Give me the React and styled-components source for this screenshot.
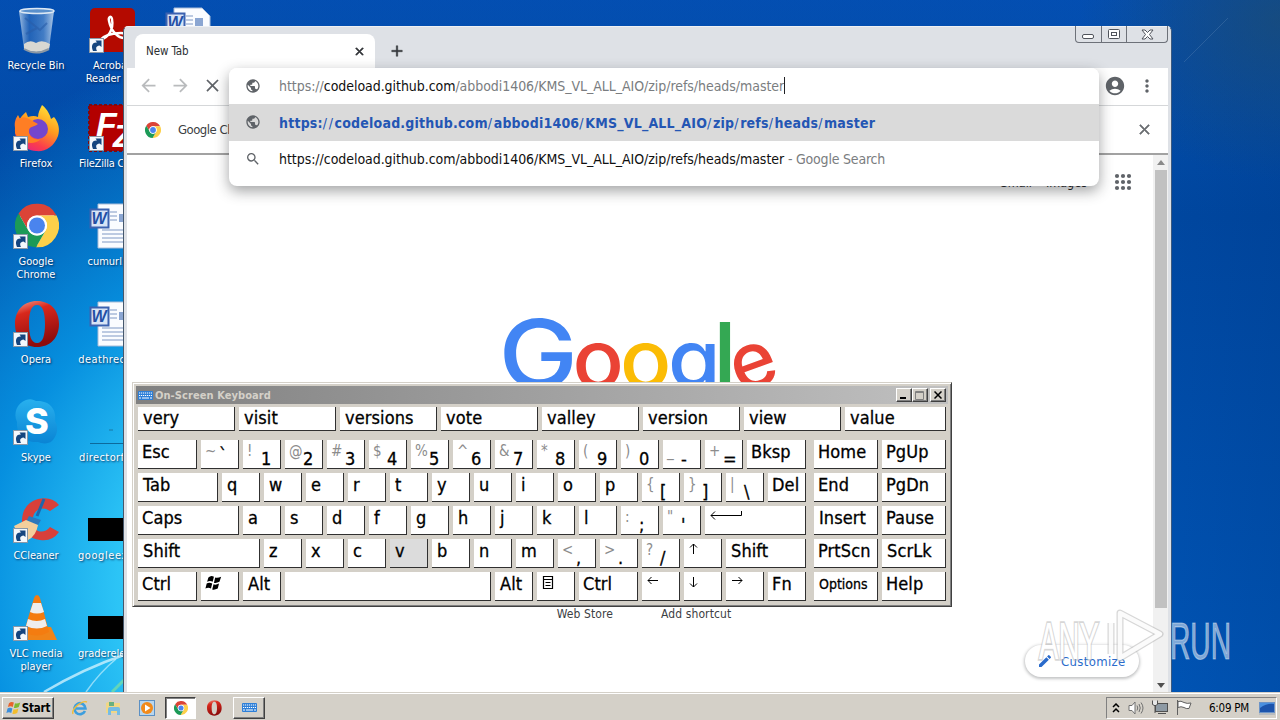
import React from 'react';
import styled, { createGlobalStyle } from 'styled-components';
import {
    MdPublic, MdSearch, MdAccountCircle, MdMoreVert, MdEdit, MdClose, MdArrowBack, MdArrowForward, MdAdd
} from 'react-icons/md';

const GlobalStyle = createGlobalStyle`
    body {
        margin: 0;
        overflow: hidden;
        font-family: "DejaVu Sans Condensed", "DejaVu Sans", sans-serif;
        font-stretch: condensed;
    }

    * {
        box-sizing: border-box;
    }

    svg {
        display: block;
        flex: none;
    }
`

const Desktop = styled.div`
    position: relative;
    width: 1280px;
    height: 720px;
    overflow: hidden;
    display: flex;
    flex-direction: column;
    justify-content: space-between;
    background:
        radial-gradient(ellipse 200px 160px at 1280px 20px, rgba(28, 76, 116, 0.75), transparent),
        linear-gradient(90deg, transparent 88%, rgba(0, 40, 100, 0.14) 100%),
        linear-gradient(180deg, rgba(0, 70, 185, 0.15), transparent 20%),
        radial-gradient(ellipse 560px 560px at 330px 590px, #4fdcfa 0%, #2cc4f6 38%, rgba(8, 160, 236, 0.8) 62%, transparent 100%),
        linear-gradient(180deg, #0450b0 0%, #0048a2 30%, #0056b8 100%);
`

const LightStreaks = styled.svg`
    position: absolute;
    left: 0;
    top: 0;
`

const IconColumns = styled.div`
    display: flex;
    margin-left: -2px;
    padding-top: 6px;
`

const IconColumn = styled.div`
    width: 76px;
    display: flex;
    flex-direction: column;
`

const DesktopItem = styled.div`
    height: 98px;
    display: flex;
    flex-direction: column;
    align-items: center;
`

const ItemLabel = styled.div`
    margin-top: 4px;
    font-size: 11px;
    line-height: 13px;
    letter-spacing: ${props => props.$spacing || 0}px;
    text-align: center;
    color: white;
    white-space: pre;
    text-shadow: 1px 1px 2px rgba(0, 20, 60, 0.8);
`

/* ---------- browser ---------- */

const Browser = styled.div`
    position: absolute;
    left: 123px;
    top: 26px;
    width: 1049px;
    height: 667px;
    padding: 0 3px;
    background: #dee1e6;
    border-left: 1px solid #46586c;
    border-top: 1px solid #eef0f3;
    border-right: 1px solid #3c5a80;
    border-radius: 5px 5px 0 0;
`

const TabStrip = styled.div`
    height: 41px;
    padding: 7px 0 0 8px;
    display: flex;
    align-items: flex-start;
`

const Tab = styled.div`
    width: 240px;
    height: 34px;
    padding: 0 9px 0 11px;
    display: flex;
    align-items: center;
    justify-content: space-between;
    background: white;
    border-radius: 8px 8px 0 0;
    font-size: 11.5px;
    letter-spacing: -0.1px;
    color: #2d2f33;

    path:last-child {
        stroke-width: 1.4px;
    }
`

const NewTabButton = styled.div`
    margin: 8px 0 0 13px;
    color: #33363b;

    path:last-child {
        stroke-width: 0.6px;
    }
`

const WindowButtons = styled.div`
    margin: -8px 0 0 auto;
    height: 17px;
    display: flex;
    border: 1px solid #6d7179;
    border-top: none;
    border-radius: 0 0 4px 4px;
`

const WindowButton = styled.div`
    width: ${props => props.$width}px;
    display: flex;
    align-items: center;
    justify-content: center;

    & + & {
        border-left: 1px solid #6d7179;
    }
`

const Toolbar = styled.div`
    height: 38px;
    display: flex;
    align-items: center;
    background: white;
    border-bottom: 1px solid #d5d7d9;
    color: #5f6368;
    padding: 0 11px 2px 11px;
    gap: 11px;
`

const Muted = styled.span`
    color: #b9bbbd;
`

const ToolbarEnd = styled.div`
    margin-left: auto;
    display: flex;
    align-items: center;
    gap: 11px;
`

const InfoBar = styled.div`
    height: 49px;
    display: flex;
    align-items: center;
    background: white;
    border-bottom: 2px solid #a2a2a2;
    padding: 0 15px 0 18px;
    gap: 17px;
    font-size: 13px;
    letter-spacing: -0.5px;
    color: #3c4043;
`

const InfoClose = styled.div`
    margin-left: auto;
    color: #6a6d71;

    path:last-child {
        stroke-width: 0.8px;
    }
`

const PageRow = styled.div`
    height: 538px;
    display: flex;
    background: white;
`

const Page = styled.div`
    flex: 1;
    display: flex;
    flex-direction: column;
    align-items: center;
`

const PageLinks = styled.div`
    align-self: stretch;
    height: 54px;
    padding: 0 21px 0 0;
    display: flex;
    justify-content: flex-end;
    align-items: center;
    gap: 14px;
    font-size: 12.5px;
    color: #202124;

    svg {
        margin-left: 13px;
    }
`

const GoogleLogo = styled.svg`
    margin-top: 102px;
    overflow: visible;
`

const Shortcuts = styled.div`
    margin: 204px 0 0 8px;
    display: flex;
    gap: 48px;
    font-size: 12px;
    line-height: 14px;
    color: #3c4043;
    letter-spacing: 0.1px;
`

const CustomizeButton = styled.div`
    align-self: flex-end;
    margin: 24px 14px 0 0;
    width: 114px;
    height: 32px;
    display: flex;
    align-items: center;
    gap: 8px;
    padding-left: 12px;
    border-radius: 16px;
    background: white;
    box-shadow: 0 1px 3px 1px rgba(60, 64, 67, 0.3);
    font-size: 13px;
    letter-spacing: 0.35px;
    color: #2a6bcb;
`

const ScrollBar = styled.div`
    width: 15px;
    display: flex;
    flex-direction: column;
    align-items: center;
    background: #f1f1f1;
    padding: 5px 0;
`

const ScrollThumb = styled.div`
    width: 12px;
    height: 438px;
    margin: 5px 0 auto;
    background: #c1c1c1;
`

const Triangle = styled.div`
    width: 0;
    height: 0;
    border: 4px solid transparent;
    ${props => props.$up ? 'border-top: none; border-bottom: 5px solid #8a8a8a;' : 'border-bottom: none; border-top: 5px solid #505050;'}
`

const Suggestions = styled.div`
    position: absolute;
    left: 105px;
    top: 41px;
    width: 870px;
    height: 118px;
    overflow: hidden;
    background: white;
    border-radius: 8px;
    box-shadow: 0 5px 14px rgba(32, 33, 36, 0.42);
`

const Suggestion = styled.div`
    height: ${props => props.$height}px;
    display: flex;
    align-items: center;
    padding: 0 0 1px 16px;
    background: ${props => props.$selected ? '#dadada' : 'white'};
    color: #5f6368;
`

const SuggestionIcon = styled.div`
    width: 34px;
`

const Url = styled.span`
    font-size: 14px;
    line-height: 18px;
    letter-spacing: ${props => props.$spacing || -0.05}px;
    white-space: pre;
    color: ${props => props.$color || '#7a7d80'};

    b {
        font-weight: normal;
        color: #101010;
    }
`

const MatchUrl = styled.span`
    font-size: 14px;
    line-height: 18px;
    padding-top: 1px;
    font-weight: bold;
    color: #2456b4;
    letter-spacing: 0.21px;
    white-space: pre;

    i {
        font-style: normal;
        font-weight: normal;
        letter-spacing: 1.6px;
    }
`

const Caret = styled.span`
    width: 1px;
    height: 17px;
    background: #202124;
`

/* ---------- on-screen keyboard ---------- */

const Keyboard = styled.div`
    position: absolute;
    left: 132px;
    top: 382px;
    width: 820px;
    height: 225px;
    padding: 2px;
    background: #d4d0c8;
    border: 1px solid #d4d0c8;
    border-right-color: #404040;
    border-bottom-color: #404040;
    box-shadow: inset 1px 1px white, inset -1px -1px #808080;
`

const TitleBar = styled.div`
    height: 18px;
    margin: 1px 1px 3px;
    padding: 0 2px;
    display: flex;
    align-items: center;
    gap: 2px;
    background: linear-gradient(90deg, #808080, #c0c0c0);
    color: #d4d0c8;
    font-size: 11px;
    font-weight: bold;
    letter-spacing: 0.08px;
`

const TitleButtons = styled.div`
    margin-left: auto;
    display: flex;
`

const TitleButton = styled.div`
    width: 16px;
    height: 14px;
    margin-left: ${props => props.$apart ? 2 : 0}px;
    display: flex;
    align-items: center;
    justify-content: center;
    background: #d4d0c8;
    border: 1px solid white;
    border-right-color: #404040;
    border-bottom-color: #404040;
    box-shadow: inset -1px -1px #808080;
`

const KeyRow = styled.div`
    display: flex;
    gap: 4px;
    height: ${props => props.$words ? 24 : 29}px;
    margin: 0 0 ${props => props.$words ? 9 : 4}px 3px;
`

const KeyCap = styled.div`
    width: ${props => props.$width}px;
    margin-left: ${props => props.$apart ? 4 : 0}px;
    flex: none;
    display: flex;
    align-items: flex-start;
    padding: ${props => props.$word ? 2 : 3}px 0 0 ${props => props.$indent || 4}px;
    background: ${props => props.$pressed ? '#dcdcdc' : 'white'};
    border-right: 1px solid #303030;
    border-bottom: 1px solid #303030;
    font-size: ${props => props.$small ? 14 : 18}px;
    line-height: 18px;
    letter-spacing: ${props => props.$small ? 0 : 0.1}px;
    color: black;
    white-space: pre;
    -webkit-text-stroke: 0.3px black;
`

const Upper = styled.span`
    width: 14px;
    font-size: 15px;
    line-height: 17px;
    color: #8c8c8c;
    -webkit-text-stroke: 0;
`

const Lower = styled.span`
    margin-top: ${props => props.$drop}px;
`

/* ---------- taskbar ---------- */

const TaskBar = styled.div`
    position: relative;
    height: 28px;
    display: flex;
    align-items: center;
    padding: 2px 3px 0 2px;
    background: #d4d0c8;
    border-top: 1px solid #d4d0c8;
    box-shadow: inset 0 1px white;
`

const TaskButton = styled.div`
    width: ${props => props.$width}px;
    height: 22px;
    margin-left: ${props => props.$left || 0}px;
    display: flex;
    align-items: center;
    justify-content: center;
    gap: 1px;
    background: ${props => props.$pressed ? 'white' : '#d4d0c8'};
    border: 1px solid ${props => props.$pressed ? '#404040' : 'white'};
    border-right-color: ${props => props.$pressed ? 'white' : '#404040'};
    border-bottom-color: ${props => props.$pressed ? 'white' : '#404040'};
    box-shadow: ${props => props.$pressed ? 'inset 1px 1px #808080' : 'inset -1px -1px #808080'};
    font-size: 11.5px;
    font-weight: bold;
    letter-spacing: -0.2px;
`

const QuickLaunch = styled.div`
    display: flex;
    gap: 17px;
    margin-left: 18px;
`

const OperaSlot = styled.div`
    margin-left: 10px;
`

const Tray = styled.div`
    width: 171px;
    height: 22px;
    margin-left: auto;
    padding: 0 1px 0 5px;
    display: flex;
    align-items: center;
    border: 1px solid #808080;
    border-right-color: white;
    border-bottom-color: white;
    font-size: 11.5px;
    letter-spacing: -0.25px;

    svg + svg {
        margin-left: 8px;
    }
`

const Clock = styled.span`
    margin: 0 auto 0 17px;
    white-space: nowrap;
`

const Watermark = styled.svg`
    position: absolute;
    left: 1030px;
    top: 604px;
`

/* ---------- drawings ---------- */

const ChromeIcon = ({ size }) => (
    <svg width={size} height={size} viewBox="2 2 44 44">
        <circle cx="24" cy="24" r="20" fill="#fff" />
        {['#db4437', '#fdd04a', '#1c9a57'].map((fill, i) => (
            <path
                key={fill}
                fill={fill}
                transform={`rotate(${i * 120} 24 24)`}
                d="M24 14L43.6 14A22 22 0 0 0 5.54 12.03L15.34 29A10 10 0 0 1 24 14Z"
            />
        ))}
        <circle cx="24" cy="24" r="10" fill="#fff" />
        <circle cx="24" cy="24" r="8" fill="#4a84ee" />
    </svg>
)

const ShortcutBadge = () => (
    <g>
        <rect x="1.500" y="32.500" width="14" height="14" fill="#f4f8fc" stroke="#8a98a8" />
        <path d="M5 45C2.500 39 5 36 9 36.500L7.500 34.500H13.500V41L11.500 39.500C8 40 7.500 42 9 45Z" fill="#15457f" />
    </g>
)

const Picture = ({ children, badge = true }) => (
    <svg width="48" height="49" viewBox="0 0 48 49">
        {children}
        {badge && <ShortcutBadge />}
    </svg>
)

const RecycleBin = () => (
    <Picture badge={false}>
        <defs>
            <linearGradient id="glass">
                <stop offset="0" stopColor="#c8dcf0" stopOpacity="0.8" />
                <stop offset="0.3" stopColor="#3f78c0" stopOpacity="0.5" />
                <stop offset="0.7" stopColor="#6d9cd4" stopOpacity="0.6" />
                <stop offset="1" stopColor="#dbe9f6" stopOpacity="0.8" />
            </linearGradient>
        </defs>
        <path d="M7 5L12 43Q24 50 37 43L42 5Z" fill="url(#glass)" />
        <path d="M12 38Q18 33 24 37Q30 33 38 38L37 43Q24 49 12 43Z" fill="#d9d8d2" />
        <path d="M13 12L28 24L35 17M14 28L25 22" stroke="#2a5ea8" strokeWidth="2" fill="none" opacity="0.6" />
        <path d="M12 43Q24 50 37 43" stroke="#8c98a4" strokeWidth="2" fill="none" />
        <ellipse cx="25" cy="5" rx="17" ry="2.500" fill="#5a90cc" stroke="#dce8f4" strokeWidth="1.500" />
    </Picture>
)

const Firefox = () => (
    <Picture>
        <defs>
            <linearGradient id="fox" x1="0.8" y1="0" x2="0.3" y2="1">
                <stop offset="0" stopColor="#ffe83a" />
                <stop offset="0.45" stopColor="#ff9a1f" />
                <stop offset="0.8" stopColor="#fb3d4c" />
                <stop offset="1" stopColor="#e8257c" />
            </linearGradient>
        </defs>
        <path d="M30 1C36 6 38 11 39 15L42 13C47 19 48 26 46 32C42 43 33 48 24 47C11 46 2 37 3 24C2 18 4 14 6 11L8 15C9 12 12 10 14 8L16 13Q22 11 26 13C26 9 28 5 30 1Z" fill="url(#fox)" />
        <circle cx="26" cy="25" r="10" fill="#7446cc" />
        <path d="M3 19C7 12 13 13 17 15L26 20C22 23 18 22 17 26C16 33 23 37 29 35C21 43 7 38 3 29Z" fill="#ff7e24" />
    </Picture>
)

const Opera = ({ size = 48, badge = true }) => (
    <svg width={size} height={badge ? size + 1 : size} viewBox={badge ? '0 0 48 49' : '0 0 48 48'}>
        <defs>
            <linearGradient id="opera" x1="0" y1="0" x2="0.3" y2="1">
                <stop offset="0" stopColor="#f5a090" />
                <stop offset="0.3" stopColor="#d8281c" />
                <stop offset="1" stopColor="#8e0c0c" />
            </linearGradient>
        </defs>
        <path fillRule="evenodd" fill="url(#opera)" d="M25 1C38 1 47 10 47 24C47 38 38 47 25 47C12 47 3 38 3 24C3 10 12 1 25 1ZM25 5C19 5 17 13 17 24C17 35 19 43 25 43C31 43 33 35 33 24C33 13 31 5 25 5Z" />
        {badge && <ShortcutBadge />}
    </svg>
)

const Acrobat = () => (
    <Picture>
        <rect x="2" y="2" width="45" height="44" rx="5" fill="#b40a00" />
        <path d="M12 34C20 32 26 24 24 13C23 9 20 11 21 15C23 25 30 33 38 32C42 31 39 27 33 27C24 27 16 30 12 34Z" fill="none" stroke="#fff" strokeWidth="2.400" />
    </Picture>
)

const FileZilla = () => (
    <Picture>
        <rect x="1" y="1" width="46" height="46" fill="#b30000" stroke="#7d0a10" strokeDasharray="3 2" strokeWidth="2" />
        <text x="8" y="32" fontFamily="Liberation Sans" fontWeight="bold" fontStyle="italic" fontSize="34" fill="#fff">F</text>
        <text x="25" y="43" fontFamily="Liberation Sans" fontWeight="bold" fontStyle="italic" fontSize="32" fill="#fff">Z</text>
    </Picture>
)

const WordDoc = () => (
    <Picture badge={false}>
        <path d="M10 2H38L46 10V46H10Z" fill="#fafcff" stroke="#a8bcd8" />
        <path d="M22 10H29M22 14H29M22 18H29M14 28H40M14 32H40M14 36H40M14 40H40" stroke="#7f98c4" />
        <rect x="31" y="12" width="8" height="8" fill="#8ba6d2" />
        <rect x="2.500" y="7.500" width="18" height="18" fill="#d8e4f6" stroke="#3c62b0" strokeWidth="2" />
        <text x="3.500" y="22" fontFamily="Liberation Sans" fontWeight="bold" fontStyle="italic" fontSize="16" fill="#234fa4">W</text>
    </Picture>
)

const Skype = () => (
    <Picture>
        <defs>
            <linearGradient id="skype" x1="0" y1="0" x2="0" y2="1">
                <stop offset="0" stopColor="#28b0ee" />
                <stop offset="1" stopColor="#0a84d4" />
            </linearGradient>
        </defs>
        <path d="M14 2C19 0 22 2 24 3C37 2 45 11 43 23C47 30 45 38 40 43C35 47 29 45 26 44C13 45 4 36 5 24C1 15 5 5 14 2Z" fill="url(#skype)" />
        <text x="13" y="36" fontFamily="Inter" fontWeight="800" fontSize="36" fill="#fff">S</text>
    </Picture>
)

const CCleaner = () => (
    <Picture>
        <path d="M47 9L38 15Q28 9 22 18Q17 30 26 35Q33 37 38 31L47 36Q40 46 28 44Q13 42 10 28Q9 8 26 3Q40 0 47 9Z" fill="#d8403a" />
        <path d="M32 3L25 20" stroke="#1f66ac" strokeWidth="3" />
        <path d="M17 20L29 24L26 29L14 26Z" fill="#2d78bc" />
        <path d="M2 30L14 24L26 29Q24 40 16 44L6 38Z" fill="#f4cf9c" />
    </Picture>
)

const Vlc = () => (
    <Picture>
        <path d="M7 33H39L45 46H3Z" fill="#f08418" />
        <path d="M25 1Q27 1 28 4L37 38Q25 45 12 38L22 4Q23 1 25 1Z" fill="#f47c10" />
        <path d="M21 9H29L32 18Q25 21 18 18ZM16 25Q25 29 33 25L35 32Q25 37 14 32Z" fill="#eeeeee" />
    </Picture>
)

const BlackFile = () => (
    <Picture badge={false}>
        <rect x="0" y="22" width="48" height="23" fill="#000" />
    </Picture>
)

const ThinFile = () => (
    <Picture badge={false}>
        <path d="M2 45.500H40" stroke="#0c6a9c" />
        <path d="M21 32H25" stroke="#1878a4" />
    </Picture>
)

const KeyboardIcon = ({ width = 15 }) => (
    <svg width={width} height={width * 0.6} viewBox="0 0 15 9">
        <rect width="15" height="9" rx="1" fill="#2d7fd8" />
        <path d="M1 2H14M1 4.500H14" stroke="#fff" strokeWidth="1.200" strokeDasharray="1.200 0.800" />
        <path d="M1 7H3M4 7H11M12 7H14" stroke="#fff" strokeWidth="1.200" />
    </svg>
)

const WindowsFlag = ({ width, colors }) => (
    <svg width={width} height={width * 0.9} viewBox="0 0 20 18">
        <path d="M4 3Q7 0 10.500 2L9 8Q6 6 2.500 8Z" fill={colors[0]} />
        <path d="M12 3Q15 4 19 2L17 8Q13 10 10.500 9Z" fill={colors[1]} />
        <path d="M2 10Q5 8 8.500 10L7 16Q4 14 0.500 16Z" fill={colors[2]} />
        <path d="M10 11Q13 12 16.500 10L15 16Q11 18 8.500 17Z" fill={colors[3]} />
    </svg>
)

const arrows = {
    left: 'M12 4.5H2M5.5 1L2 4.5L5.5 8',
    right: 'M2 4.5H12M8.5 1L12 4.5L8.5 8',
    up: 'M5.5 11V1M2 4.5L5.5 1L9 4.5',
    down: 'M5.5 1V11M2 7.5L5.5 11L9 7.5'
}

const KeyArrow = ({ to }) => (
    <svg width="18" height="14" viewBox="0 -1 18 14" fill="none" stroke="#000">
        <path d={arrows[to]} />
    </svg>
)

const EnterArrow = () => (
    <svg width="36" height="14" viewBox="0 -1 36 14" fill="none" stroke="#000">
        <path d="M32.500 1V5.500H2M6 1.500L2 5.500L6 9.500" />
    </svg>
)

const MenuGlyph = () => (
    <svg width="14" height="16" viewBox="-1 -1 14 16" fill="none" stroke="#000">
        <path d="M0.500 0.500H9.500V12.500H0.500ZM0 3.500H10M2.500 6.500H7.500M2.500 9.500H7.500" strokeWidth="1.200" />
    </svg>
)

/* ---------- data ---------- */

const desktopColumns = [
    [
        { art: <RecycleBin />, label: 'Recycle Bin' },
        { art: <Firefox />, label: 'Firefox' },
        { art: <Picture><g transform="translate(3 1.500)"><ChromeIcon size={44} /></g></Picture>, label: 'Google\nChrome' },
        { art: <Opera />, label: 'Opera' },
        { art: <Skype />, label: 'Skype' },
        { art: <CCleaner />, label: 'CCleaner' },
        { art: <Vlc />, label: 'VLC media\nplayer' }
    ],
    [
        { art: <Acrobat />, label: 'Acrobat\nReader DC' },
        { art: <FileZilla />, label: 'FileZilla Client', spacing: -0.2 },
        { art: <WordDoc />, label: 'cumurl.rtf' },
        { art: <WordDoc />, label: 'deathrecei...', spacing: 0.4 },
        { art: <ThinFile />, label: 'directorfor...', spacing: 0.4 },
        { art: <BlackFile />, label: 'googleexp...', spacing: 0.6 },
        { art: <BlackFile />, label: 'gradereleas...' }
    ],
    [{ art: <WordDoc />, label: '' }]
]

const words = ['very', 'visit', 'versions', 'vote', 'valley', 'version', 'view', 'value']

const letters = text => text.split('').map(label => ({ label, indent: 5 }))
const pairs = list => list.map(([upper, label]) => ({ upper, label }))

const keyRows = [
    [
        { label: 'Esc', width: 59 },
        { upper: '~', label: '`', drop: 3 },
        ...pairs(['!1', '@2', '#3', '$4', '%5', '^6', '&7', '*8', '(9', ')0', '_-', '+=']),
        { label: 'Bksp', width: 59 },
        { label: 'Home', width: 64, apart: true },
        { label: 'PgUp', width: 64 }
    ],
    [
        { label: 'Tab', width: 80, indent: 5 },
        ...letters('qwertyuiop'),
        ...pairs(['{[', '}]', '|\\']),
        { label: 'Del' },
        { label: 'End', width: 64, apart: true },
        { label: 'PgDn', width: 64 }
    ],
    [
        { label: 'Caps', width: 101 },
        ...letters('asdfghjkl'),
        ...pairs([':;', '"\'']),
        { art: <EnterArrow />, width: 101 },
        { label: 'Insert', width: 64, apart: true, indent: 5 },
        { label: 'Pause', width: 64 }
    ],
    [
        { label: 'Shift', width: 122, indent: 5 },
        ...letters('zxc'),
        { label: 'v', pressed: true, indent: 5 },
        ...letters('bnm'),
        ...pairs(['<,', '>.', '?/']),
        { art: <KeyArrow to="up" /> },
        { label: 'Shift', width: 80, indent: 5 },
        { label: 'PrtScn', width: 64, apart: true },
        { label: 'ScrLk', width: 64, indent: 5 }
    ],
    [
        { label: 'Ctrl', width: 59 },
        { art: <WindowsFlag width={17} colors={['#000', '#000', '#000', '#000']} /> },
        { label: 'Alt', indent: 5 },
        { label: '', width: 206 },
        { label: 'Alt', indent: 5 },
        { art: <MenuGlyph />, indent: 5 },
        { label: 'Ctrl', width: 59 },
        { art: <KeyArrow to="left" /> },
        { art: <KeyArrow to="down" /> },
        { art: <KeyArrow to="right" /> },
        { label: 'Fn' },
        { label: 'Options', width: 64, apart: true, small: true, indent: 5 },
        { label: 'Help', width: 64 }
    ]
]

const Key = ({ item }) => (
    <KeyCap
        $width={item.width || 38}
        $indent={item.indent}
        $apart={item.apart}
        $pressed={item.pressed}
        $small={item.small}
    >
        {item.upper && <Upper>{item.upper}</Upper>}
        {item.art || <Lower $drop={item.upper ? (item.drop || 7) : 0}>{item.label}</Lower>}
    </KeyCap>
)

const matchParts = ['https:', '//', 'codeload.github.com', '/', 'abbodi1406', '/', 'KMS_VL_ALL_AIO', '/', 'zip', '/', 'refs', '/', 'heads', '/', 'master']

const logoLetters = [
    { char: 'G', x: 497.5, y: 388, size: 95, fill: '#4285f4', stretch: 1.12 },
    { char: 'o', x: 571.5, y: 388, size: 81, fill: '#ea4335', stretch: 1.05 },
    { char: 'o', x: 619, y: 388, size: 81, fill: '#fbbc05', stretch: 1.05 },
    { char: 'g', x: 667, y: 388, size: 81, fill: '#4285f4', stretch: 1.05 },
    { char: 'l', x: 712, y: 391, size: 95, fill: '#34a853' },
    { char: 'e', x: 729.5, y: 387, size: 78, fill: '#ea4335', turn: -20 }
]

const BrowserWindow = () => (
    <Browser>
        <TabStrip>
            <Tab>
                New Tab
                <MdClose size={13} />
            </Tab>
            <NewTabButton><MdAdd size={18} /></NewTabButton>
            <WindowButtons>
                <WindowButton $width={25}>
                    <svg width="13" height="16"><rect x="0.500" y="8.500" width="11" height="4" rx="1.500" fill="#fff" stroke="#50545c" /></svg>
                </WindowButton>
                <WindowButton $width={25}>
                    <svg width="12" height="11" fill="#fff" stroke="#50545c">
                        <rect x="0.500" y="0.500" width="11" height="9" rx="1" />
                        <rect x="3.500" y="3.500" width="5" height="3" />
                    </svg>
                </WindowButton>
                <WindowButton $width={41}>
                    <svg width="13" height="11" viewBox="0 0 13 11">
                        <path d="M1 1H4L6.500 3.500L9 1H12L8.500 5.500L12 10H9L6.500 7.500L4 10H1L4.500 5.500Z" fill="#fff" stroke="#50545c" />
                    </svg>
                </WindowButton>
            </WindowButtons>
        </TabStrip>
        <Toolbar>
            <Muted><MdArrowBack size={21} /></Muted>
            <Muted><MdArrowForward size={21} /></Muted>
            <MdClose size={21} />
            <ToolbarEnd>
                <MdAccountCircle size={22} />
                <MdMoreVert size={20} />
            </ToolbarEnd>
        </Toolbar>
        <InfoBar>
            <ChromeIcon size={16} />
            Google Chrome
            <InfoClose><MdClose size={17} /></InfoClose>
        </InfoBar>
        <PageRow>
            <Page>
                <PageLinks>
                    <span>Gmail</span>
                    <span>Images</span>
                    <svg width="18" height="18" fill="#5f6368">
                        {[3, 9, 15].map(y => [3, 9, 15].map(x => <circle key={x + '-' + y} cx={x} cy={y} r="2.100" />))}
                    </svg>
                </PageLinks>
                <GoogleLogo width="290" height="92" viewBox="494 311 290 92">
                    {logoLetters.map((l, i) => (
                        <g key={i} transform={`translate(${l.x} ${l.y}) scale(${l.stretch || 1} 1)`}>
                            <text
                                fontFamily="Inter"
                                fontWeight="500"
                                fontSize={l.size}
                                fill={l.fill}
                                transform={l.turn ? `rotate(${l.turn} 24 -22)` : undefined}
                            >
                                {l.char}
                            </text>
                        </g>
                    ))}
                </GoogleLogo>
                <Shortcuts>
                    <span>Web Store</span>
                    <span>Add shortcut</span>
                </Shortcuts>
                <CustomizeButton>
                    <MdEdit size={16} />
                    Customize
                </CustomizeButton>
            </Page>
            <ScrollBar>
                <Triangle $up />
                <ScrollThumb />
                <Triangle />
            </ScrollBar>
        </PageRow>
        <Suggestions>
            <Suggestion $height={36}>
                <SuggestionIcon><MdPublic size={16} /></SuggestionIcon>
                <Url>https://<b>codeload.github.com</b>/abbodi1406/KMS_VL_ALL_AIO/zip/refs/heads/master</Url>
                <Caret />
            </Suggestion>
            <Suggestion $height={37} $selected>
                <SuggestionIcon><MdPublic size={16} /></SuggestionIcon>
                <MatchUrl>
                    {matchParts.map((part, i) => i % 2 ? <i key={i}>{part}</i> : part)}
                </MatchUrl>
            </Suggestion>
            <Suggestion $height={37}>
                <SuggestionIcon><MdSearch size={16} /></SuggestionIcon>
                <Url $color="#101010">https://codeload.github.com/abbodi1406/KMS_VL_ALL_AIO/zip/refs/heads/master</Url>
                <Url $spacing={-0.2}> - Google Search</Url>
            </Suggestion>
        </Suggestions>
    </Browser>
)

const OnScreenKeyboard = () => (
    <Keyboard>
        <TitleBar>
            <KeyboardIcon />
            On-Screen Keyboard
            <TitleButtons>
                <TitleButton>
                    <svg width="8" height="8"><rect y="6" width="6" height="2" /></svg>
                </TitleButton>
                <TitleButton>
                    <svg width="10" height="9" fill="none" stroke="#808080"><path d="M0.500 0.500H8.500V8.500H0.500ZM0 1.500H9" /></svg>
                </TitleButton>
                <TitleButton $apart>
                    <svg width="8" height="8" stroke="#000" strokeWidth="1.500"><path d="M0.500 0.500L7.500 7.500M7.500 0.500L0.500 7.500" /></svg>
                </TitleButton>
            </TitleButtons>
        </TitleBar>
        <KeyRow $words>
            {words.map((word, i) => <KeyCap key={word} $width={i === 7 ? 101 : 97} $indent={5} $word>{word}</KeyCap>)}
        </KeyRow>
        {keyRows.map((row, r) => (
            <KeyRow key={r}>
                {row.map((item, i) => <Key key={i} item={item} />)}
            </KeyRow>
        ))}
    </Keyboard>
)

const App = () => (
    <>
        <GlobalStyle />
        <Desktop>
            <LightStreaks width="1280" height="720" fill="none" stroke="#d8f6ff">
                <path d="M44 692Q85 668 124 655" strokeWidth="2.500" opacity="0.75" />
                <path d="M86 692Q100 672 116 659" strokeWidth="1.500" opacity="0.6" />
                <path d="M112 692L124 680" stroke="#7ee0a0" strokeWidth="3" opacity="0.7" />
                <path d="M1184 62L1228 18" stroke="#5c88b8" opacity="0.35" />
            </LightStreaks>
            <IconColumns>
                {desktopColumns.map((column, c) => (
                    <IconColumn key={c}>
                        {column.map((item, i) => (
                            <DesktopItem key={i}>
                                {item.art}
                                <ItemLabel $spacing={item.spacing}>{item.label}</ItemLabel>
                            </DesktopItem>
                        ))}
                    </IconColumn>
                ))}
            </IconColumns>
            <BrowserWindow />
            <OnScreenKeyboard />
            <TaskBar>
                <TaskButton $width={52}>
                    <WindowsFlag width={15} colors={['#e8632c', '#7db832', '#3b8edb', '#f3bd2c']} />
                    Start
                </TaskButton>
                <QuickLaunch>
                    <svg width="16" height="16" viewBox="0 0 16 16" fill="none">
                        <path d="M13 11A5.500 5.500 0 1 1 13.500 8.500H4" stroke="#3d9ede" strokeWidth="2.600" />
                        <path d="M1 14C-1 9 10 0 15 2" stroke="#f0bc38" strokeWidth="1.400" />
                    </svg>
                    <svg width="17" height="16" viewBox="0 0 17 16">
                        <path d="M1 3L6 1L8 3H15V13H1Z" fill="#f1d786" />
                        <rect x="4" y="2" width="5" height="4" fill="#68b080" />
                        <path d="M3 15V9Q3 7 5 7H13Q15 7 15 9V15H12V11H6V15Z" fill="#76bce4" />
                    </svg>
                    <svg width="16" height="16" viewBox="0 0 16 16">
                        <rect x="0.500" y="0.500" width="15" height="15" fill="#b8d6ee" stroke="#5b90c4" />
                        <circle cx="8" cy="8" r="6" fill="#f28a1a" />
                        <path d="M6 4.500L11.500 8L6 11.500Z" fill="#fff" />
                    </svg>
                </QuickLaunch>
                <TaskButton $width={31} $left={10} $pressed><ChromeIcon size={14} /></TaskButton>
                <OperaSlot><Opera size={16} badge={false} /></OperaSlot>
                <TaskButton $width={32} $left={11}><KeyboardIcon /></TaskButton>
                <Tray>
                    <svg width="8" height="10" fill="none" stroke="#000" strokeWidth="1.500"><path d="M1 4L4 1L7 4M1 9L4 6L7 9" /></svg>
                    <svg width="16" height="14" viewBox="0 0 16 14" fill="#fff" stroke="#707070">
                        <path d="M1 4.500H4L7 1V13L4 9.500H1Z" />
                        <path d="M9 4.500Q10.500 7 9 9.500M11 3Q13.500 7 11 11M13 1.500Q17 7 13 12.500" fill="none" />
                    </svg>
                    <svg width="16" height="15" viewBox="0 0 16 15" fill="#e8e8e8" stroke="#505050">
                        <rect x="3.500" y="3.500" width="12" height="8" fill="#8e9aa4" />
                        <path d="M6 13.500H14" />
                        <path d="M0.500 0.500V4.500Q3 7 5.500 4.500V0.500M3 6V13" />
                    </svg>
                    <svg width="16" height="15" viewBox="0 0 16 15" fill="#fff" stroke="#606060">
                        <path d="M1.500 0V15M2 1.500Q5 0.500 8 2.500Q11 4 15 3L13 8.500Q10 9 8 7.500Q5 6 2 7.500Z" />
                    </svg>
                    <Clock>6:09 PM</Clock>
                    <svg width="16" height="14" viewBox="0 0 16 14">
                        <rect x="0.500" y="1.500" width="15" height="10" fill="#1c54ac" stroke="#6c94c8" />
                        <path d="M1 7Q8 2 15 3V2H1Z" fill="#4a90e0" />
                        <path d="M0 13H16" stroke="#9aa8b8" />
                    </svg>
                </Tray>
            </TaskBar>
            <Watermark width="206" height="66" viewBox="0 0 206 66" fontFamily="Liberation Sans Narrow, Liberation Sans" fontSize="51">
                <text x="9" y="55" textLength="60" lengthAdjust="spacingAndGlyphs" fill="#fff" stroke="#b0b0b0" strokeOpacity="0.5" strokeWidth="3.500" paintOrder="stroke">ANY</text>
                <g fill="none" stroke="#b0b0b0" strokeOpacity="0.5" strokeWidth="7" strokeLinejoin="round">
                    <path d="M81 19V50M90 9L130 30L90 54Z" />
                    <path d="M81 19V50M90 9L130 30L90 54Z" stroke="#fff" strokeOpacity="0.9" strokeWidth="4.500" />
                </g>
                <text x="140" y="55" textLength="61" lengthAdjust="spacingAndGlyphs" fill="#fff" fillOpacity="0.5" stroke="#fff" strokeOpacity="0.4" strokeWidth="1.200">RUN</text>
            </Watermark>
        </Desktop>
    </>
)

export default App;
